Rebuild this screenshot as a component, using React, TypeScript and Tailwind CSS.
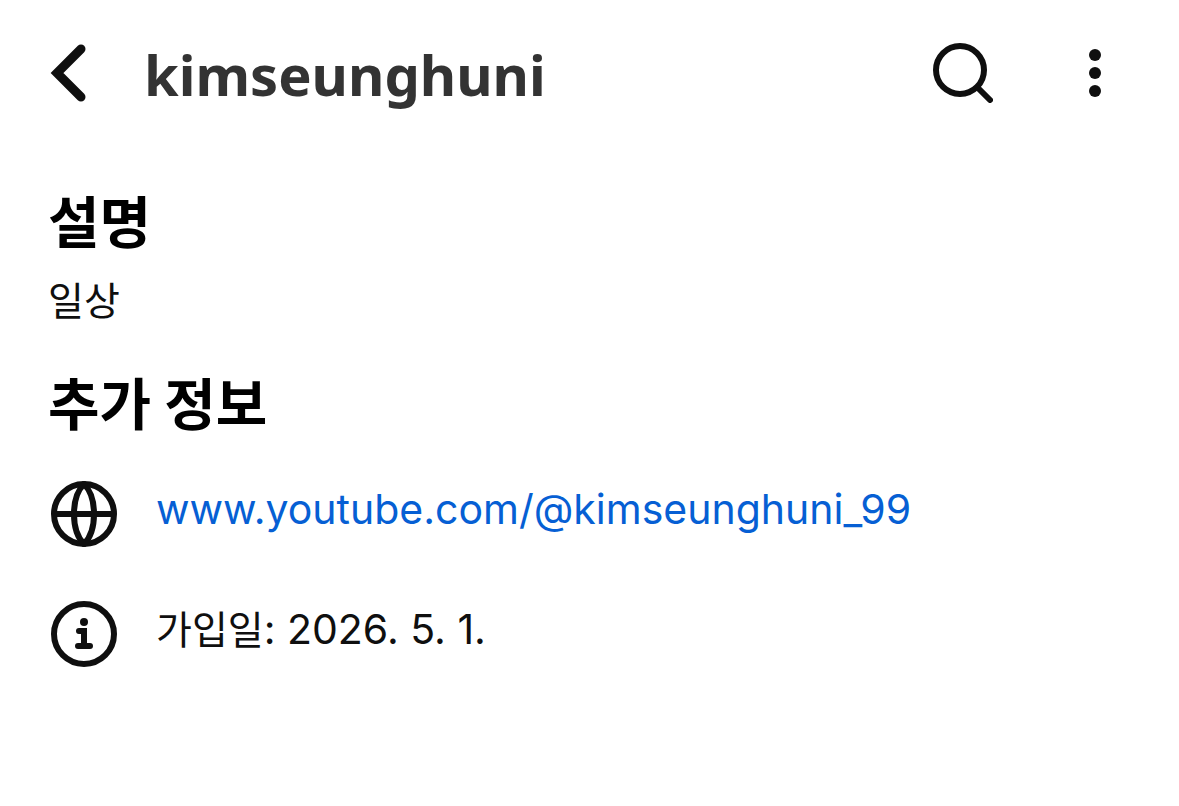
import type { ReactNode } from 'react';

function BackIcon() {
  return (
    <svg className="h-[60px] w-[36px]" viewBox="0 0 36 60" fill="none" aria-hidden="true">
      <path d="M31 6L7 30L31 54" stroke="#0f0f0f" strokeWidth="9" strokeLinecap="round" />
    </svg>
  );
}

function SearchIcon() {
  return (
    <svg className="h-[60px] w-[60px]" viewBox="0 0 60 60" fill="none" stroke="#0f0f0f" strokeWidth="6" aria-hidden="true">
      <circle cx="27" cy="27" r="24" />
      <path d="M45 45L57 57" strokeLinecap="round" />
    </svg>
  );
}

function MoreIcon() {
  return (
    <svg className="h-[60px] w-[12px]" viewBox="0 0 12 60" fill="#0f0f0f" aria-hidden="true">
      <circle cx="6" cy="12" r="6" />
      <circle cx="6" cy="30" r="6" />
      <circle cx="6" cy="48" r="6" />
    </svg>
  );
}

function GlobeIcon() {
  return (
    <svg className="size-[66px] shrink-0" viewBox="0 0 66 66" fill="none" stroke="#0f0f0f" strokeWidth="6" aria-hidden="true">
      <circle cx="33" cy="33" r="30" />
      <path d="M3 33H63" />
      <path d="M33 3C27 9 23 20 23 33C23 46 27 57 33 63C39 57 43 46 43 33C43 20 39 9 33 3Z" />
    </svg>
  );
}

function InfoIcon() {
  return (
    <svg className="size-[66px] shrink-0" viewBox="0 0 66 66" fill="none" stroke="#0f0f0f" strokeWidth="6" aria-hidden="true">
      <circle cx="33" cy="33" r="30" />
      <circle cx="33" cy="21" r="4" fill="#0f0f0f" stroke="none" />
      <path d="M28 30H33V45M27 45H39" strokeLinecap="round" />
    </svg>
  );
}

function InfoRow({ icon, children }: { icon: ReactNode; children: ReactNode }) {
  return (
    <li className="flex items-start gap-[39px]">
      {icon}
      <div className="min-w-0 text-[41px] leading-[56px]">{children}</div>
    </li>
  );
}

export default function App() {
  return (
    <div className="min-h-screen bg-white pb-12 font-['Inter','Noto_Sans_CJK_KR',sans-serif] text-[#0f0f0f]">
      <header className="flex items-start pt-[43px] pr-[78px] pl-[50px]">
        <button type="button" aria-label="뒤로" className="shrink-0">
          <BackIcon />
        </button>
        <h1 className="ml-[58px] min-w-0 flex-1 text-[56px] leading-[62px] font-bold whitespace-nowrap text-[#333] font-['Noto_Sans',sans-serif]">
          kimseunghuni
        </h1>
        <button type="button" aria-label="검색" className="shrink-0">
          <SearchIcon />
        </button>
        <button type="button" aria-label="더보기" className="ml-24 shrink-0">
          <MoreIcon />
        </button>
      </header>
      <main className="px-12 pt-[78px]">
        <section>
          <h2 className="text-[56px] leading-[80px] font-bold text-black">설명</h2>
          <p className="text-[39px] leading-[76px]">일상</p>
        </section>
        <section className="pt-[26px]">
          <h2 className="text-[56px] leading-[80px] font-bold text-black">추가 정보</h2>
          <ul className="flex flex-col gap-[54px] pt-9 pl-[3px]">
            <InfoRow icon={<GlobeIcon />}>
              <a href="https://www.youtube.com/@kimseunghuni_99" className="break-words text-[#065fd4]">
                www.youtube.com/@kimseunghuni_99
              </a>
            </InfoRow>
            <InfoRow icon={<InfoIcon />}>
              <span className="text-[39px]">가입일</span>: 2026. 5. 1.
            </InfoRow>
          </ul>
        </section>
      </main>
    </div>
  );
}
